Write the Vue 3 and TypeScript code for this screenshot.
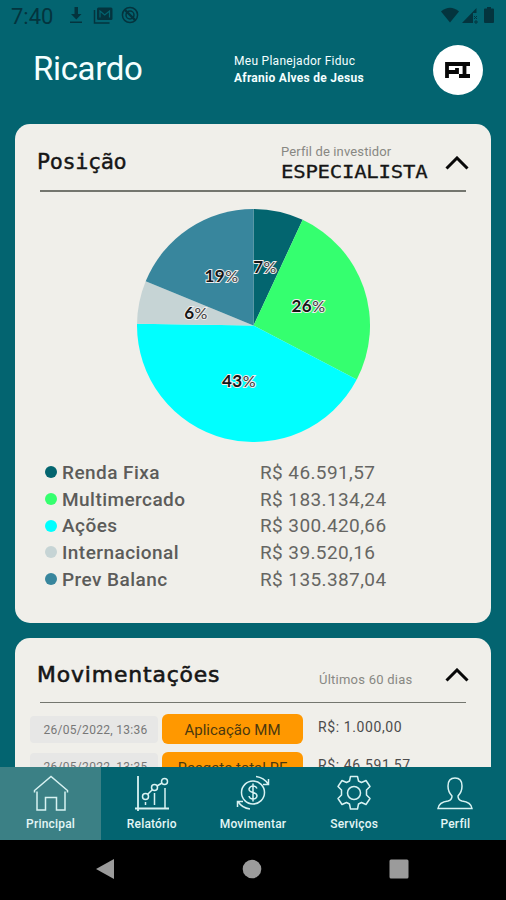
<script setup lang="ts">
interface Asset {
  name: string
  amount: string
  share: number
  color: string
  labelX: number
  labelY: number
}

const assets: Asset[] = [
  { name: 'Renda Fixa', amount: 'R$ 46.591,57', share: 7, color: '#03656f', labelX: 128, labelY: 64 },
  { name: 'Multimercado', amount: 'R$ 183.134,24', share: 26, color: '#35ff6f', labelX: 171.5, labelY: 102.5 },
  { name: 'Ações', amount: 'R$ 300.420,66', share: 43, color: '#00ffff', labelX: 102, labelY: 178 },
  { name: 'Internacional', amount: 'R$ 39.520,16', share: 6, color: '#c6d4d5', labelX: 59, labelY: 109.5 },
  { name: 'Prev Balanc', amount: 'R$ 135.387,04', share: 19, color: '#38869d', labelX: 84.5, labelY: 73 },
]

const RADIUS = 116.5
const total = assets.reduce((sum, a) => sum + a.share, 0)

function rim(value: number): string {
  const angle = (value / total) * Math.PI * 2
  return `${RADIUS + RADIUS * Math.sin(angle)} ${RADIUS - RADIUS * Math.cos(angle)}`
}

let cursor = 0
const slices = assets.map((asset) => {
  const start = cursor
  cursor += asset.share
  return {
    ...asset,
    path: `M${RADIUS} ${RADIUS}L${rim(start)}A${RADIUS} ${RADIUS} 0 0 1 ${rim(cursor)}Z`,
  }
})

const movements = [
  { date: '26/05/2022, 13:36', kind: 'Aplicação MM', amount: 'R$: 1.000,00' },
  { date: '26/05/2022, 13:35', kind: 'Resgate total RF', amount: 'R$: 46.591,57' },
]

const tabs = ['Principal', 'Relatório', 'Movimentar', 'Serviços', 'Perfil']
</script>

<template>
  <div class="phone">
    <div class="status">
      <span class="clock">7:40</span>
      <svg class="st-left" width="76" height="20" viewBox="0 0 76 20">
        <path d="M6.500 1h3.500v7h3.500l-5.200 5.500L3 8h3.500zM2 15.500h12v1.600H2z" fill="currentColor" />
        <path d="M26.500 4v13h15" fill="none" stroke="currentColor" stroke-width="1.500" />
        <rect x="29" y="1.500" width="15.500" height="12.500" rx="1.500" fill="currentColor" />
        <path d="M32 11.500V5l4.700 4L41.500 5v6.500" fill="none" stroke="#036470" stroke-width="1.200" />
        <circle cx="62" cy="9" r="7.600" fill="none" stroke="currentColor" stroke-width="1.500" />
        <circle cx="62" cy="9" r="4" fill="none" stroke="currentColor" stroke-width="1.500" />
        <path d="M57 4l10 10" stroke="currentColor" stroke-width="2.400" />
      </svg>
      <svg class="st-right" width="56" height="18" viewBox="0 0 56 18">
        <path d="M0 4.500Q9-3 18 4.500L9 15.500z" fill="currentColor" />
        <path d="M21 16L35.500 1v5h-3.500v10z" fill="currentColor" />
        <path d="M33 9l3 3m0-3l-3 3M34 14h2v2h-2z" stroke="currentColor" stroke-width="1" fill="none" />
        <path d="M46 1.500V0h4v1.500h2q1 0 1 1V15q0 1-1 1h-8q-1 0-1-1V2.500q0-1 1-1z" fill="currentColor" />
      </svg>
    </div>

    <header class="top">
      <h1>Ricardo</h1>
      <div class="planner">
        <span>Meu Planejador Fiduc</span>
        <strong>Afranio Alves de Jesus</strong>
      </div>
      <div class="logo">
        <svg width="26" height="16" viewBox="0 0 26 16">
          <path d="M2 16V2h12M2 10h10V6M14 2h11M19.500 2v12M14 14h11" fill="none" stroke="#080808" stroke-width="3.800" />
        </svg>
      </div>
    </header>

    <main class="content">
      <section class="card position">
        <div class="card-head">
          <h2>Posição</h2>
          <div class="profile">
            <span>Perfil de investidor</span>
            <b>ESPECIALISTA</b>
          </div>
          <svg class="chevron" width="24" height="14" viewBox="0 0 24 14">
            <path d="M1.500 12.500L12 2l10.500 10.500" fill="none" stroke="#080808" stroke-width="3" />
          </svg>
        </div>
        <svg class="pie" width="233" height="233" viewBox="0 0 233 233">
          <path v-for="s in slices" :key="s.name" :d="s.path" :fill="s.color" />
          <text v-for="s in slices" :key="s.share" class="pct" :x="s.labelX" :y="s.labelY">
            {{ s.share }}<tspan class="sign">%</tspan>
          </text>
        </svg>
        <ul class="legend">
          <li v-for="a in assets" :key="a.name">
            <svg class="dot" width="12" height="12" viewBox="0 0 12 12"><circle cx="6" cy="6" r="6" :fill="a.color" /></svg>
            <b>{{ a.name }}</b>
            <span>{{ a.amount }}</span>
          </li>
        </ul>
      </section>

      <section class="card movements">
        <div class="card-head">
          <h2>Movimentações</h2>
          <span class="period">Últimos 60 dias</span>
          <svg class="chevron" width="24" height="14" viewBox="0 0 24 14">
            <path d="M1.500 12.500L12 2l10.500 10.500" fill="none" stroke="#080808" stroke-width="3" />
          </svg>
        </div>
        <div class="moves">
          <div v-for="m in movements" :key="m.date" class="move">
            <span class="date">{{ m.date }}</span>
            <span class="kind">{{ m.kind }}</span>
            <span class="amount">{{ m.amount }}</span>
          </div>
        </div>
      </section>
    </main>

    <nav class="tabs">
      <div v-for="(tab, i) in tabs" :key="tab" class="tab" :class="{ active: i === 0 }">
        <svg width="38" height="38" viewBox="0 0 38 38" fill="none" stroke="#d8f2f2" stroke-width="1.500">
          <path v-if="i === 0" d="M5 17.500V36H13.500V23.500h11V36H33V17.500M2.500 18.500v-2L19 2.500l16.500 14v2" />
          <g v-else-if="i === 1">
            <path d="M5 2v35M2 34.500h34" stroke-width="1.800" />
            <circle cx="12.500" cy="22.500" r="3" /><circle cx="21.500" cy="13.500" r="3" /><circle cx="31.500" cy="7.500" r="3" />
            <path d="M14.700 20.300l4.600-4.600M24 12l5-3M12.500 28v3M21.500 19v12M32 14v20" />
          </g>
          <g v-else-if="i === 2">
            <circle cx="19" cy="18.500" r="11.500" />
            <path d="M23 14.500q-1-2.500-4-2.500t-4 3q0 2.500 4 3.500t4 3.500q-.5 3-4 3t-4-3M19 9.500v18" />
            <path d="M22 2.500q8 1 12 7.500M34.500 5v5.500H29M16 35q-8-1-12-7.500M3.500 33v-5.500H9" />
          </g>
          <g v-else-if="i === 3">
            <circle cx="19" cy="19" r="6.500" />
            <path d="M15.500 2.500h7l1 4.500 3 1.500 4.500-2 4 6-3.500 3.500v5l3.500 3.500-4 6-4.500-2-3 1.500-1 5h-7l-1-5-3-1.500-4.500 2-4-6L6.500 21v-5L3 12.500l4-6 4.500 2 3-1.500z" stroke-linejoin="round" />
          </g>
          <path v-else d="M2 34.500h34q-1-6.500-10-7.500-4-1-4-5 4-4 4-10 0-8-7-8t-7 8q0 6 4 10 0 4-4 5-9 1-10 7.500z" />
        </svg>
        <span>{{ tab }}</span>
      </div>
    </nav>

    <div class="system">
      <svg width="18" height="22" viewBox="0 0 18 22"><path d="M18 1v20L0 11z" fill="#9b9b9b" /></svg>
      <svg width="20" height="20" viewBox="0 0 20 20"><circle cx="10" cy="10" r="9.300" fill="#9b9b9b" /></svg>
      <svg width="20" height="20" viewBox="0 0 20 20"><rect width="19" height="19" x=".5" y=".5" rx="1.500" fill="#9b9b9b" /></svg>
    </div>
  </div>
</template>

<style>
body {
  margin: 0;
}
</style>

<style scoped>
.phone {
  display: flex;
  flex-direction: column;
  width: 506px;
  height: 900px;
  overflow: hidden;
  background: #036470;
  font-family: Roboto, "Liberation Sans", sans-serif;
}
h1, h2, ul {
  margin: 0;
  padding: 0;
}
svg {
  display: block;
  flex: none;
}
.status {
  display: flex;
  flex: none;
  box-sizing: border-box;
  height: 34px;
  padding: 0 10px 0 11px;
  color: #04343e;
}
.clock {
  width: 57px;
  font-size: 22px;
  line-height: 34px;
}
.st-left {
  margin-top: 6px;
}
.st-right {
  margin: 7px -1px 0 auto;
}
.top {
  display: flex;
  flex: none;
  height: 90px;
  padding: 0 23px 0 33px;
  box-sizing: border-box;
  color: #f4ffff;
}
h1 {
  width: 201px;
  font-size: 33px;
  font-weight: 400;
  line-height: 69px;
  letter-spacing: -0.35px;
}
.planner {
  display: flex;
  flex-direction: column;
  padding-top: 19px;
  font-size: 12px;
  line-height: 17px;
  letter-spacing: 0.28px;
  white-space: nowrap;
}
.planner strong {
  letter-spacing: 0.27px;
}
.logo {
  display: flex;
  align-items: center;
  justify-content: center;
  width: 50px;
  height: 50px;
  margin: 11px 0 0 auto;
  border-radius: 50%;
  background: #fff;
}
.content {
  display: flex;
  flex: none;
  flex-direction: column;
  gap: 15px;
  height: 643px;
  padding: 0 15px;
  overflow: hidden;
}
.card {
  flex: none;
  box-sizing: border-box;
  border-radius: 15px;
  background: #f0efea;
}
.position {
  height: 499px;
}
.movements {
  height: 240px;
}
.card-head {
  display: flex;
  box-sizing: border-box;
  height: 68px;
  margin: 0 25px;
  border-bottom: 2px solid #74766f;
}
.movements .card-head {
  height: 65px;
  border-bottom-width: 1px;
}
h2 {
  width: 243px;
  margin-left: -3px;
  color: #161616;
  font-family: "DejaVu Sans Mono", monospace;
  font-size: 21px;
  font-weight: 400;
  line-height: 76px;
  letter-spacing: -0.4px;
  transform: scaleX(1.04);
  transform-origin: left;
  -webkit-text-stroke: 0.4px #161616;
}
.movements h2 {
  width: 282px;
  font-family: "DejaVu Sans", sans-serif;
  line-height: 74px;
  letter-spacing: 0.85px;
  -webkit-text-stroke: 0.6px #161616;
}
.profile {
  display: flex;
  flex-direction: column;
  width: 147px;
  padding-top: 18px;
  margin-left: 1px;
  color: #888883;
  font-size: 13px;
  line-height: 20px;
  letter-spacing: 0.13px;
}
.profile b {
  color: #161616;
  font-family: "DejaVu Sans Mono", monospace;
  font-size: 18.500px;
  font-weight: 400;
  letter-spacing: -0.2px;
  transform: scaleX(1.115);
  transform-origin: left;
  -webkit-text-stroke: 0.3px #161616;
}
.chevron {
  margin: 32px -3px 0 auto;
}
.movements .chevron {
  margin-top: 30px;
}
.period {
  color: #888883;
  font-size: 13px;
  line-height: 83px;
  letter-spacing: 0.24px;
}
.pie {
  margin: 17px auto 0 122px;
}
.pct {
  fill: #161616;
  stroke: #ededed;
  stroke-width: 2px;
  paint-order: stroke;
  font-family: Lato, sans-serif;
  font-size: 17px;
  font-weight: 700;
  letter-spacing: 0.5px;
  text-anchor: middle;
}
.sign {
  fill: #3a3a3a;
  font-size: 16px;
  font-weight: 400;
}
.legend {
  padding: 17px 0 0 30px;
  list-style: none;
}
.legend li {
  display: flex;
  align-items: center;
  height: 26.700px;
  color: #666663;
  font-size: 19px;
  letter-spacing: 0.4px;
}
.legend b {
  width: 198px;
  margin-left: 5px;
  color: #5c5c5a;
  font-weight: 500;
  letter-spacing: 0.45px;
}
.moves {
  display: flex;
  flex-direction: column;
  gap: 7px;
  padding: 11px 15px 0;
}
.move {
  display: flex;
  height: 30.500px;
}
.date {
  width: 128px;
  height: 27px;
  margin-top: 1.500px;
  border-radius: 4px;
  background: #e7e7e6;
  color: #777;
  font-size: 12px;
  line-height: 29px;
  letter-spacing: 0.3px;
  text-align: center;
  text-indent: 3px;
}
.kind {
  width: 141px;
  height: 30px;
  margin: 0 0 0 4px;
  border-radius: 6px;
  background: #ff9800;
  color: #4b390f;
  font-size: 15px;
  line-height: 32px;
  text-align: center;
}
.amount {
  margin-left: 15px;
  color: #4c4c4c;
  font-size: 14px;
  line-height: 26px;
  letter-spacing: 0.6px;
}
.tabs {
  display: flex;
  flex: none;
  height: 73px;
}
.tab {
  display: flex;
  flex: 1;
  flex-direction: column;
  align-items: center;
  padding-top: 7px;
  color: #e4f6f6;
  font-size: 12px;
  font-weight: 500;
  line-height: 25px;
  letter-spacing: 0.2px;
}
.active {
  background: #3b8085;
}
.system {
  display: flex;
  flex: none;
  align-items: center;
  justify-content: space-between;
  height: 60px;
  padding: 0 97px 2px 96px;
  box-sizing: border-box;
  background: #000;
}
</style>
